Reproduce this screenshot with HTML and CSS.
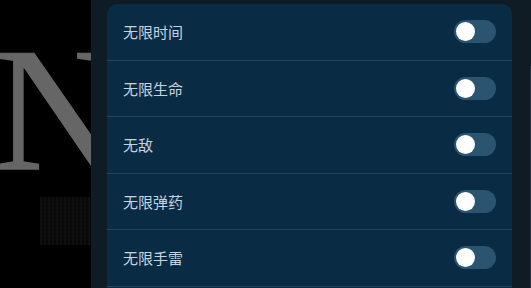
FILE: index.html
```html
<!DOCTYPE html>
<html lang="zh-CN">
<head>
  <meta charset="UTF-8">
  <title>作弊菜单</title>
  <link rel="stylesheet" href="styles.css">
</head>
<body>
  <div class="backdrop">
    <div class="logo">N</div>
    <div class="dither"></div>
  </div>

  <div class="panel">
    <div class="card">
      <div class="row">
        <span class="label">无限时间</span>
        <span class="switch"><span class="knob"></span></span>
      </div>
      <div class="row">
        <span class="label">无限生命</span>
        <span class="switch"><span class="knob"></span></span>
      </div>
      <div class="row">
        <span class="label">无敌</span>
        <span class="switch"><span class="knob"></span></span>
      </div>
      <div class="row">
        <span class="label">无限弹药</span>
        <span class="switch"><span class="knob"></span></span>
      </div>
      <div class="row">
        <span class="label">无限手雷</span>
        <span class="switch"><span class="knob"></span></span>
      </div>
      <div class="row-more"></div>
    </div>
  </div>
</body>
</html>
```

FILE: styles.css
```css
html, body {
  margin: 0;
  height: 100%;
}
body {
  display: flex;
  background-color: #000;
  font-family: "Noto Sans CJK SC", "Noto Sans", sans-serif;
  overflow: hidden;
}
.backdrop {
  width: 91px;
  flex-shrink: 0;
  overflow: hidden;
  display: flex;
  flex-direction: column;
}
.logo {
  font-family: "Liberation Serif", serif;
  font-size: 176px;
  line-height: 1;
  color: #666;
  margin-top: 22px;
  margin-left: -6px;
  height: 171px;
  -webkit-text-stroke: 1.5px #666;
}
.dither {
  width: 51px;
  height: 48px;
  margin-left: 40px;
  margin-top: 4px;
  background-color: #060606;
  background-image:
    repeating-linear-gradient(90deg, #0f0f0f 0 2px, transparent 2px 4px),
    repeating-linear-gradient(0deg, #0a0a0a 0 2px, transparent 2px 4px);
}
.panel {
  flex: 1;
  background-color: #0f1b25;
  padding: 4px 19px 0 16px;
  position: relative;
}
.panel::after {
  content: "";
  position: absolute;
  right: 0;
  top: 66px;
  bottom: 0;
  width: 1px;
  background-color: #2a3440;
}
.card {
  background-color: #0a2b44;
  border-radius: 10px 10px 0 0;
}
.row {
  display: flex;
  align-items: center;
  justify-content: space-between;
  height: 55.5px;
  padding: 0 16px;
  border-bottom: 1px solid #1e4660;
}
.row-more {
  height: 20px;
}
.label {
  font-size: 15px;
  color: #c3d4e0;
}
.switch {
  width: 42px;
  height: 23px;
  border-radius: 12px;
  background-color: #2b5470;
  display: flex;
  align-items: center;
  padding: 0 2px;
  box-sizing: border-box;
}
.knob {
  width: 19px;
  height: 19px;
  border-radius: 50%;
  background-color: #fff;
}
```
